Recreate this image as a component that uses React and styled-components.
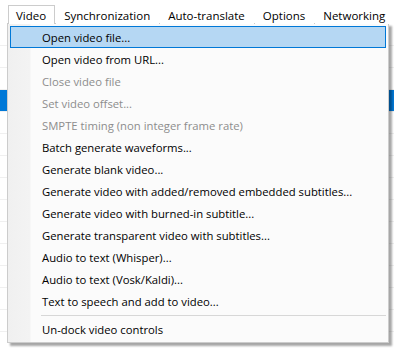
import React from 'react';
import styled, { createGlobalStyle } from 'styled-components';

const GlobalStyle = createGlobalStyle`
  html, body {
    margin: 0;
    padding: 0;
    background: #ffffff;
  }
  body {
    font-family: "Open Sans", "Noto Sans", "Liberation Sans", sans-serif;
    font-size: 11.3px;
    color: #000;
  }
`;

const Screen = styled.div`
  position: relative;
  width: 394px;
  height: 350px;
  overflow: hidden;
  background: #fff;
`;

const MenuBar = styled.div`
  display: flex;
  align-items: flex-end;
  height: 24px;
  padding-left: 8px;
  background: #fff;
  white-space: nowrap;
  font-size: 11.5px;
`;

const MenuTitle = styled.div`
  box-sizing: border-box;
  height: 19px;
  padding: 0 8px 0 7px;
  display: flex;
  align-items: center;
  flex-shrink: 0;
  margin-right: 1px;
  border: 1px solid ${p => (p.$open ? '#cccccc' : 'transparent')};
  border-bottom: none;
  background: #fff;
  position: relative;
  z-index: 2;
`;

const Backdrop = styled.div`
  position: absolute;
  left: 0;
  top: 24px;
  width: 394px;
  height: 326px;
  display: grid;
  grid-template-rows: repeat(14, 22px);
`;

const BackRow = styled.div`
  border-bottom: 1px solid #f0f0f0;
  background: ${p => (p.$selected ? '#0078d7' : 'transparent')};
`;

const Dropdown = styled.div`
  position: absolute;
  left: 7px;
  top: 23px;
  width: 382px;
  box-sizing: border-box;
  border: 1px solid #cccccc;
  background: linear-gradient(to right, #f0f0f0 0, #f3f3f3 22px, #fbfbfb 23px, #fbfbfb 100%);
  box-shadow: 3px 3px 2px rgba(0, 0, 0, 0.35);
  padding: 2px;
  z-index: 1;
`;

const Item = styled.div`
  box-sizing: border-box;
  height: 22px;
  display: flex;
  align-items: center;
  padding-left: 31px;
  white-space: nowrap;
  color: ${p => (p.$disabled ? '#8d8d8d' : '#000')};
  background: ${p => (p.$active ? '#b5d7f3' : 'transparent')};
  border: 1px solid ${p => (p.$active ? '#0078d7' : 'transparent')};
`;

const Separator = styled.div`
  height: 6px;
  display: flex;
  align-items: center;
  padding-left: 31px;
  &::after {
    content: '';
    flex: 1;
    height: 1px;
    background: #d7d7d7;
  }
`;

const titles = ['Video', 'Synchronization', 'Auto-translate', 'Options', 'Networking'];

const items = [
  { label: 'Open video file...', active: true },
  { label: 'Open video from URL...' },
  { label: 'Close video file', disabled: true },
  { label: 'Set video offset...', disabled: true },
  { label: 'SMPTE timing (non integer frame rate)', disabled: true },
  { label: 'Batch generate waveforms...' },
  { label: 'Generate blank video...' },
  { label: 'Generate video with added/removed embedded subtitles...' },
  { label: 'Generate video with burned-in subtitle...' },
  { label: 'Generate transparent video with subtitles...' },
  { label: 'Audio to text (Whisper)...' },
  { label: 'Audio to text (Vosk/Kaldi)...' },
  { label: 'Text to speech and add to video...' },
  { separator: true },
  { label: 'Un-dock video controls' },
];

export default function App() {
  return (
    <Screen>
      <GlobalStyle />
      <MenuBar>
        {titles.map((t, i) => (
          <MenuTitle key={t} $open={i === 0}>
            {t}
          </MenuTitle>
        ))}
      </MenuBar>
      <Backdrop>
        {Array.from({ length: 14 }).map((_, i) => (
          <BackRow key={i} $selected={i === 3} />
        ))}
      </Backdrop>
      <Dropdown>
        {items.map((it, i) =>
          it.separator ? (
            <Separator key={i} />
          ) : (
            <Item key={i} $active={it.active} $disabled={it.disabled}>
              {it.label}
            </Item>
          )
        )}
      </Dropdown>
    </Screen>
  );
}
